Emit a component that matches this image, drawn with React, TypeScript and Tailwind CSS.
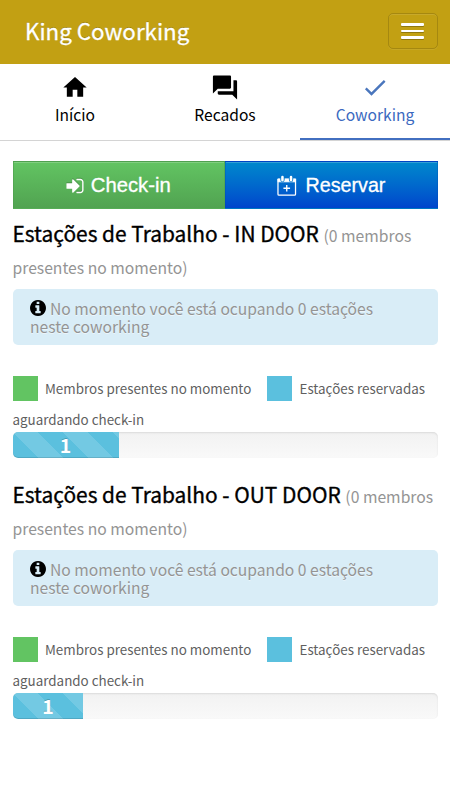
import React from "react";
import { MdCheck, MdForum, MdHome } from "react-icons/md";

function SignInIcon() {
  return (
    <svg viewBox="0 0 1792 1792" className="mr-[6px] h-[20px] w-[20px] shrink-0 drop-shadow-[0_-1px_0_rgba(0,0,0,0.2)]" fill="currentColor">
      <path d="M1312 896q0 26-19 45l-544 544q-19 19-45 19t-45-19-19-45v-288h-448q-26 0-45-19t-19-45v-384q0-26 19-45t45-19h448v-288q0-26 19-45t45-19 45 19l544 544q19 19 19 45zm352-352v704q0 119-84.5 203.5t-203.5 84.5h-320q-13 0-22.5-9.5t-9.5-22.5q0-4-1-20t-.5-26.5 3-23.5 10-19.5 20.5-6.5h320q66 0 113-47t47-113v-704q0-66-47-113t-113-47h-312l-11.5-1-11.5-3-8-5.5-7-9-2-13.5q0-4-1-20t-.5-26.5 3-23.5 10-19.5 20.5-6.5h320q119 0 203.5 84.5t84.5 203.5z" />
    </svg>
  );
}

function CalendarPlusIcon() {
  return (
    <svg viewBox="0 0 20 22" className="mr-[9px] h-[21.5px] w-[19.5px] shrink-0" fill="none" stroke="currentColor">
      <path d="M1 4.5h18v15.2a1 1 0 0 1-1 1H2a1 1 0 0 1-1-1z" strokeWidth="1.3" />
      <path d="M1 4h18v3H1z" fill="currentColor" strokeWidth="0.8" />
      <path d="M5.6 2.4v2.8M14.4 2.4v2.8" stroke="#0079cc" strokeWidth="4.4" strokeLinecap="round" />
      <path d="M5.6 2v3.4M14.4 2v3.4" strokeWidth="2.6" strokeLinecap="round" />
      <path d="M10 10.2v6.8M6.6 13.6h6.8" strokeWidth="1.4" />
    </svg>
  );
}

function InfoIcon() {
  return (
    <svg viewBox="128 128 1536 1536" className="mr-[4px] inline-block h-[16px] w-[16px] align-[-1px] text-black" fill="currentColor">
      <path d="M1152 1376v-160q0-14-9-23t-23-9h-96v-512q0-14-9-23t-23-9h-320q-14 0-23 9t-9 23v160q0 14 9 23t23 9h96v320h-96q-14 0-23 9t-9 23v160q0 14 9 23t23 9h448q14 0 23-9t9-23zm-128-896v-160q0-14-9-23t-23-9h-192q-14 0-23 9t-9 23v160q0 14 9 23t23 9h192q14 0 23-9t9-23zm640 416q0 209-103 385.5t-279.5 279.5-385.5 103-385.5-103-279.5-279.5-103-385.5 103-385.5 279.5-279.5 385.5-103 385.5 103 279.5 279.5 103 385.5z" />
    </svg>
  );
}

function Station({ name, percent }: { name: string; percent: number }) {
  return (
    <section className="h-[261px]">
      <h3 className="h-[58.5px] whitespace-nowrap text-[20.9px] leading-[32.5px] text-black">
        <span className="[-webkit-text-stroke:0.35px_black]">Estações de Trabalho - {name}</span>{" "}
        <small className="text-[15.7px] leading-[20px] text-[#949494]">
          (0 membros
          <br />
          presentes no momento)
        </small>
      </h3>
      <div className="mt-[14px] h-[56px] rounded-[5px] bg-[#d9edf7] px-[17.5px] pt-[11px] text-[15.65px] leading-[17.5px] text-[#949494] [text-shadow:0_1px_0_rgba(255,255,255,0.5)]">
        <InfoIcon />
        No momento você está ocupando 0 estações
        <br />
        neste coworking
      </div>
      <div className="mt-[31px] flex h-[25px] items-center whitespace-nowrap text-[13.4px] text-[#5f5f5f]">
        <span className="mr-[7.5px] h-[25px] w-[25px] bg-[#62c462]" />
        <span className="w-[222px]">Membros presentes no momento</span>
        <span className="mr-[7.5px] h-[25px] w-[25px] bg-[#5bc0de]" />
        <span>Estações reservadas</span>
      </div>
      <div className="h-[31px] pt-[6px] text-[13.4px] leading-[24px] text-[#5f5f5f]">aguardando check-in</div>
      <div className="h-[25.5px] rounded-[5px] bg-gradient-to-b from-[#f2f2f2] to-[#f9f9f9] shadow-[inset_0_1px_2px_rgba(0,0,0,0.1)]">
        <div
          className="h-full rounded-l-[5px] bg-[#5bc0de] bg-[linear-gradient(45deg,rgba(255,255,255,0.15)_25%,transparent_25%,transparent_50%,rgba(255,255,255,0.15)_50%,rgba(255,255,255,0.15)_75%,transparent_75%,transparent)] bg-[length:50px_50px] text-center text-[19.5px] font-bold leading-[25px] text-white shadow-[inset_0_-1px_0_rgba(0,0,0,0.12)] [text-shadow:0_-1px_0_rgba(0,0,0,0.2)]"
          style={{ width: `${percent}%` }}
        >
          1
        </div>
      </div>
    </section>
  );
}

export default function App() {
  return (
    <div className="h-[800px] w-[450px] overflow-hidden bg-white font-['Noto_Sans_CJK_SC','Noto_Sans',sans-serif]">
      <header className="flex h-[63.5px] items-center justify-between bg-[#c2a013] pl-[25px] pr-[12.5px]">
        <span className="mb-[4px] text-[22.35px] leading-[56px] text-white [-webkit-text-stroke:0.3px_white] [text-shadow:0_-1px_0_rgba(0,0,0,0.2)]">King Coworking</span>
        <button aria-label="Menu" className="mt-[-2px] flex h-[36px] w-[50px] flex-col items-center justify-center gap-[4px] rounded-[5px] border border-black/15 shadow-[inset_0_1px_0_rgba(255,255,255,0.1),0_1px_0_rgba(255,255,255,0.08)]">
          <span className="h-[2.5px] w-[23px] rounded-[1px] bg-white shadow-[0_1px_0_rgba(0,0,0,0.25)]" />
          <span className="h-[2.5px] w-[23px] rounded-[1px] bg-white shadow-[0_1px_0_rgba(0,0,0,0.25)]" />
          <span className="h-[2.5px] w-[23px] rounded-[1px] bg-white shadow-[0_1px_0_rgba(0,0,0,0.25)]" />
        </button>
      </header>
      <nav className="grid h-[77px] grid-cols-3 border-b border-[#d4d4d4] text-[15.6px] text-black">
        <a className="flex flex-col items-center pt-[9px]">
          <MdHome className="h-[29px] w-[28px]" />
          <span className="leading-[25px]">Início</span>
        </a>
        <a className="flex flex-col items-center pt-[9px]">
          <MdForum className="h-[29px] w-[30px]" />
          <span className="leading-[25px]">Recados</span>
        </a>
        <a className="flex flex-col items-center border-b-[2.5px] border-[#426fc0] pt-[9px] text-[#3b69c0]">
          <MdCheck className="h-[29px] w-[28px] text-[#4a76bd]" />
          <span className="leading-[25px]">Coworking</span>
        </a>
      </nav>
      <main className="px-[12.5px] pt-[20.5px]">
        <div className="mb-[7.5px] grid h-[48px] grid-cols-2 font-['Liberation_Sans',Arial,sans-serif] text-[20.3px] text-white [-webkit-text-stroke:0.3px_white] [text-shadow:0_-1px_0_rgba(0,0,0,0.25)]">
          <button className="flex items-center justify-center border border-[#4f9f4f]/60 bg-[#5ab45a] bg-gradient-to-b from-[#62c462] to-[#51a351] pr-[2px] pt-px shadow-[inset_0_1px_0_rgba(255,255,255,0.2)]">
            <SignInIcon />
            Check-in
          </button>
          <button className="flex items-center justify-center border border-[#0044aa]/25 bg-gradient-to-b from-[#0088cc] to-[#0044cc] pt-px text-[19.7px] shadow-[inset_0_1px_0_rgba(255,255,255,0.2)]">
            <CalendarPlusIcon />
            Reservar
          </button>
        </div>
        <Station name="IN DOOR" percent={25} />
        <Station name="OUT DOOR" percent={16.6667} />
      </main>
    </div>
  );
}
